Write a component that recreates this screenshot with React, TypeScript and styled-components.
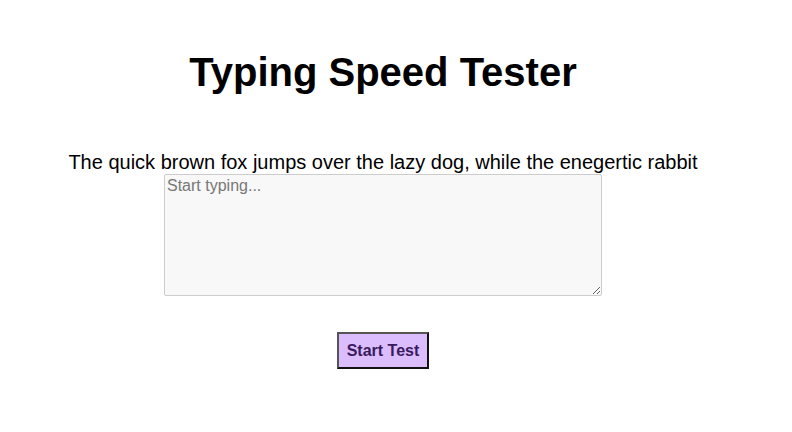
import React from "react";
import styled, { createGlobalStyle } from "styled-components";

const Global = createGlobalStyle`
  html, body { margin: 0; padding: 0; background: #ffffff; }
  body { font-family: "Liberation Sans", Arial, sans-serif; color: #000; }
`;

const Page = styled.main`
  width: 766px;
  display: flex;
  flex-direction: column;
  align-items: center;
  padding-top: 49px;
`;

const Title = styled.h1`
  margin: 0;
  font-size: 40px;
  font-weight: bold;
  line-height: 46px;
`;

const Prompt = styled.p`
  margin: 56px 0 0;
  font-size: 20px;
  line-height: 23px;
`;

const Input = styled.textarea`
  display: block;
  box-sizing: border-box;
  width: 438px;
  height: 122px;
  margin: 0;
  padding: 2px;
  background: #f8f8f8;
  border: 1px solid #cccccc;
  border-radius: 2px;
  font-family: "Liberation Sans", Arial, sans-serif;
  font-size: 16px;
  line-height: 18px;
  &::placeholder { color: #777777; }
`;

const StartButton = styled.button`
  margin-top: 36px;
  box-sizing: border-box;
  height: 37px;
  padding: 0 8px;
  background: #dbbcfd;
  color: #3a1a5e;
  border: 2px solid;
  border-color: #555555 #111111 #111111 #555555;
  font-family: "Liberation Sans", Arial, sans-serif;
  font-size: 16px;
  font-weight: bold;
  cursor: pointer;
`;

export default function App() {
  return (
    <>
      <Global />
      <Page>
        <Title>Typing Speed Tester</Title>
        <Prompt>The quick brown fox jumps over the lazy dog, while the enegertic rabbit</Prompt>
        <Input placeholder="Start typing..." />
        <StartButton>Start Test</StartButton>
      </Page>
    </>
  );
}
